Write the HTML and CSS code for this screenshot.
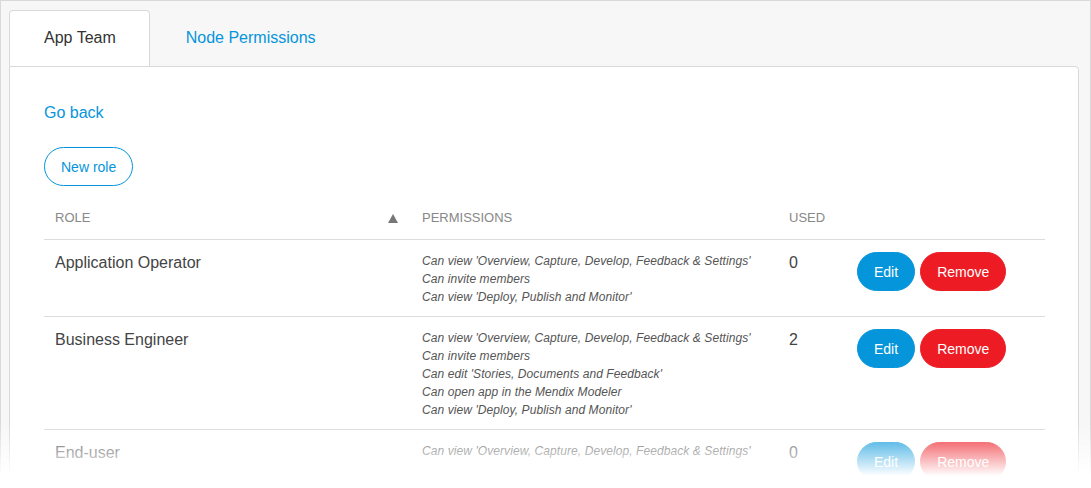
FILE: index.html
```html
<!DOCTYPE html>
<html lang="en">
<head>
<meta charset="utf-8">
<title>App Team</title>
<link rel="stylesheet" href="styles.css">
</head>
<body>
<div class="page">
  <div class="tabs">
    <div class="tab tab-active">App Team</div>
    <div class="tab tab-link">Node Permissions</div>
  </div>
  <div class="panel">
    <a class="back" href="#">Go back</a>
    <button class="btn btn-outline">New role</button>
    <div class="table">
      <div class="row row-head">
        <div class="cell cell-role-head">
          <span>Role</span>
          <svg class="sort" width="10" height="9" viewBox="0 0 10 9"><path d="M5 0 L10 9 L0 9 Z" fill="#777"/></svg>
        </div>
        <div class="cell">Permissions</div>
        <div class="cell">Used</div>
        <div class="cell"></div>
      </div>

      <div class="row">
        <div class="cell role">Application Operator</div>
        <div class="cell perms">
          <div>Can view 'Overview, Capture, Develop, Feedback &amp; Settings'</div>
          <div>Can invite members</div>
          <div>Can view 'Deploy, Publish and Monitor'</div>
        </div>
        <div class="cell used">0</div>
        <div class="cell actions">
          <button class="btn btn-blue">Edit</button>
          <button class="btn btn-red">Remove</button>
        </div>
      </div>

      <div class="row">
        <div class="cell role">Business Engineer</div>
        <div class="cell perms">
          <div>Can view 'Overview, Capture, Develop, Feedback &amp; Settings'</div>
          <div>Can invite members</div>
          <div>Can edit 'Stories, Documents and Feedback'</div>
          <div>Can open app in the Mendix Modeler</div>
          <div>Can view 'Deploy, Publish and Monitor'</div>
        </div>
        <div class="cell used">2</div>
        <div class="cell actions">
          <button class="btn btn-blue">Edit</button>
          <button class="btn btn-red">Remove</button>
        </div>
      </div>

      <div class="row">
        <div class="cell role">End-user</div>
        <div class="cell perms">
          <div>Can view 'Overview, Capture, Develop, Feedback &amp; Settings'</div>
        </div>
        <div class="cell used">0</div>
        <div class="cell actions">
          <button class="btn btn-blue">Edit</button>
          <button class="btn btn-red">Remove</button>
        </div>
      </div>
    </div>
  </div>
  <div class="fade"></div>
</div>
</body>
</html>
```

FILE: styles.css
```css
html, body {
  margin: 0;
  padding: 0;
  height: 100%;
  overflow: hidden;
  background: #fff;
}

body {
  font-family: "Liberation Sans", Arial, sans-serif;
  color: #444;
}

.page {
  box-sizing: border-box;
  min-height: 100vh;
  border: 1px solid #d9d9d9;
  background: #f7f7f7;
  padding: 9px 11px 0 8px;
}

.tabs {
  display: flex;
}

.tab {
  border: 1px solid transparent;
  border-bottom: 0;
  border-radius: 4px 4px 0 0;
  padding: 15px 33px 16px 34px;
  font-size: 16px;
  line-height: 24px;
}

.tab-active {
  background: #fff;
  border-color: #d9d9d9;
  color: #333;
}

.tab-link {
  color: #0595db;
  padding-left: 35px;
}

.panel {
  background: #fff;
  border: 1px solid #d9d9d9;
  border-radius: 0 4px 0 0;
  padding: 34px 33px 40px 34px;
}

.back {
  display: block;
  width: max-content;
  font-size: 16px;
  line-height: 24px;
  color: #0595db;
  text-decoration: none;
  margin-bottom: 22px;
}

.btn {
  box-sizing: border-box;
  height: 39px;
  padding: 0 16px;
  border-radius: 20px;
  border: 1px solid transparent;
  font-family: "Liberation Sans", Arial, sans-serif;
  font-size: 14px;
  cursor: pointer;
}

.btn-outline {
  background: #fff;
  color: #0595db;
  border-color: #0595db;
}

.btn-blue {
  background: #0595db;
  border-color: #0595db;
  color: #fff;
}

.btn-red {
  background: #ed1c24;
  border-color: #ed1c24;
  color: #fff;
}

.table {
  margin-top: 14px;
}

.row {
  display: grid;
  grid-template-columns: 367px 367px 68px 1fr;
  border-bottom: 1px solid #dcdcdc;
  align-items: start;
}

.cell {
  padding: 12px 11px 10px;
}

.row-head .cell {
  padding: 10px 11px 13px;
  font-size: 13px;
  line-height: 16px;
  color: #888;
  text-transform: uppercase;
}

.row-head .cell-role-head {
  display: flex;
  justify-content: space-between;
  align-items: center;
  padding-right: 13px;
}

.role,
.used {
  font-size: 16px;
  line-height: 22px;
  color: #444;
}

.perms {
  font-size: 12px;
  line-height: 18px;
  font-style: italic;
  letter-spacing: 0.08px;
  color: #555;
}

.actions {
  display: flex;
  gap: 5px;
}

.fade {
  position: fixed;
  left: 0;
  right: 0;
  bottom: 0;
  height: 66px;
  background: linear-gradient(rgba(255, 255, 255, 0) 0%, #fff 82%);
  pointer-events: none;
}
```
